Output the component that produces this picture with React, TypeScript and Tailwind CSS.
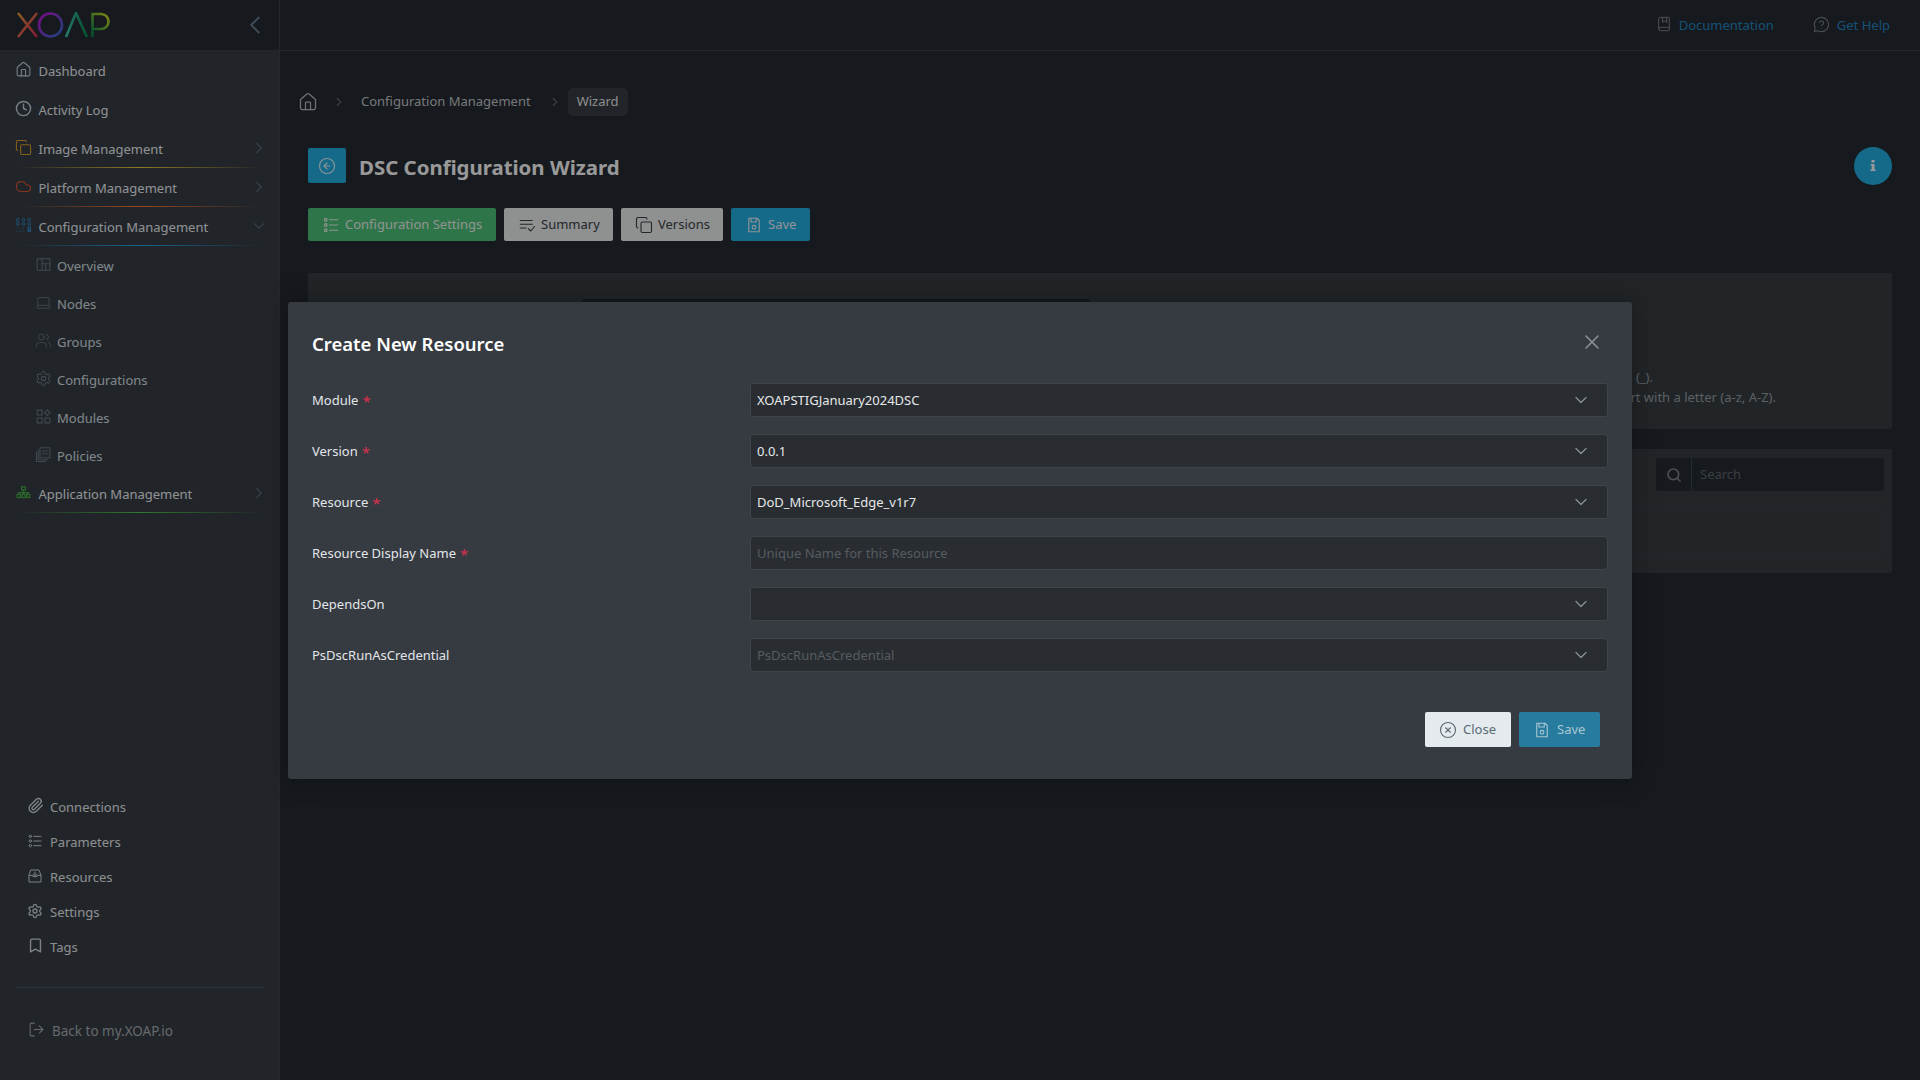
import React from "react";
import { Home, Clock, Copy, Cloud, Laptop, Users, Settings, Paperclip, Bookmark, LogOut, ChevronLeft, ChevronRight, ChevronDown, Search, X, CircleArrowLeft, CircleX, BookMarked, MessageCircleQuestion } from "lucide-react";

type I = { className?: string };
const S = ({ className, children }: I & { children: React.ReactNode }) => (
  <svg viewBox="0 0 24 24" fill="none" stroke="currentColor" strokeWidth="1.5" strokeLinecap="round" strokeLinejoin="round" className={className}>{children}</svg>
);
const SaveIcon = ({ className }: I) => (
  <S className={className}><path d="M5 3h11l3 3v15H5z" /><path d="M8 3v5h7V3" /><circle cx="12" cy="15" r="2.5" /></S>
);
const ListDetails = ({ className }: I) => (
  <S className={className}><circle cx="5" cy="5" r="1.8" /><circle cx="5" cy="12" r="1.8" /><circle cx="5" cy="19" r="1.8" /><path d="M10 5h11M10 12h11M10 19h11" /></S>
);
const ListCheck = ({ className }: I) => (
  <S className={className}><path d="M3 6h16M3 11h16M3 16h8M14 17l3 3 5-6" /></S>
);
const Overview = ({ className }: I) => (
  <S className={className}><rect x="3" y="4" width="18" height="16" /><path d="M10 4v16M10 11h11M15 11v9" /></S>
);
const Modules = ({ className }: I) => (
  <S className={className}><rect x="3" y="3" width="7" height="7" /><rect x="3" y="14" width="7" height="7" /><rect x="14" y="14" width="7" height="7" /><path d="M17.5 2.500l4 4-4 4-4-4z" /></S>
);
const Policies = ({ className }: I) => (
  <S className={className}><rect x="7" y="2.5" width="14" height="14" /><path d="M4.500 6v13.500H18M2 9v13h13M10.500 7h7M10.500 11h7" /></S>
);
const Inbox = ({ className }: I) => (
  <S className={className}><path d="M6 3h12l3 8v10H3V11z" /><path d="M3 11h6v2h6v-2h6" /><path d="M12 6v5M9.500 9l2.500 2.500L14.500 9" /></S>
);
const Sitemap = ({ className }: I) => (
  <svg viewBox="0 0 24 24" fill="none" stroke="currentColor" strokeWidth="2" className={className}>
    <rect x="9" y="3" width="6" height="5" />
    <path d="M12 8v4M4.500 15v-3h15v3M12 12v3" />
    <rect x="2" y="15" width="5" height="5" />
    <rect x="9.500" y="15" width="5" height="5" />
    <rect x="17" y="15" width="5" height="5" />
  </svg>
);
const InfoGlyph = ({ className }: I) => (
  <svg viewBox="0 0 6 11" fill="currentColor" className={className}>
    <rect x="1.5" y="0" width="3" height="2.5" />
    <path d="M0.500 4h4v5.500h1.200V11H0.300V9.500h1.400V5.500H0.500z" />
  </svg>
);
const ConfigDots = ({ className }: I) => (
  <svg viewBox="0 0 26 24" fill="none" stroke="currentColor" strokeWidth="1.6" className={className}>
    {[3, 13, 23].flatMap((x) => [3, 10].map((y) => <circle key={x + "-" + y} cx={x} cy={y} r="2.4" />))}
    <path d="M1 17.500h2M7 17.500h1M12 17.500h2" strokeDasharray="1.5 2" />
    <rect x="21" y="15.5" width="4" height="4" />
    <path d="M1 22.500h14" strokeDasharray="1.5 2.5" />
    <rect x="21" y="20.5" width="4" height="3" />
  </svg>
);

const Logo = () => (
  <svg viewBox="0 0 94 26" className="w-[94px] h-[26px] ml-[16px]" fill="none" strokeWidth="2.6">
    <defs>
      <linearGradient id="lx" x1="0" x2="1" y1="0" y2="1"><stop offset="0" stopColor="#e89a38" /><stop offset="1" stopColor="#e02a5e" /></linearGradient>
      <linearGradient id="lo" x1="0" x2="1" y1="0" y2="1"><stop offset="0" stopColor="#d010e0" /><stop offset="1" stopColor="#2f72d0" /></linearGradient>
      <linearGradient id="la" x1="0" x2="1" y1="0" y2="0"><stop offset="0" stopColor="#3ec8b4" /><stop offset="1" stopColor="#0a8a50" /></linearGradient>
      <linearGradient id="lp" gradientUnits="userSpaceOnUse" x1="76" x2="93" y1="20" y2="4"><stop offset="0" stopColor="#0a8a50" /><stop offset="1" stopColor="#d0e020" /></linearGradient>
    </defs>
    <path d="M2 1l19 24M21 1L2 25" stroke="url(#lx)" />
    <circle cx="34.5" cy="13" r="11.5" stroke="url(#lo)" />
    <path d="M50 25L60 1l11 24" stroke="url(#la)" />
    <path d="M76.500 25V2H85a7.500 7.500 0 0 1 0 15h-8" stroke="url(#lp)" />
  </svg>
);

const Glyph = ({ children, color }: { children: React.ReactNode; color: string }) => (
  <span className={"w-[14px] h-[14px] shrink-0 mr-[8.5px] -mt-[2px] flex items-center justify-center " + color}>{children}</span>
);

const Row = ({ icon, label, color, arrow, line, open }: { icon: React.ReactNode; label: string; color?: string; arrow?: boolean; line?: string; open?: boolean }) => (
  <div className={line ? "h-[39px]" : "h-[39px] flex items-center pl-[16px] pr-[16px]"}>
    {line ? (
      <>
        <div className="h-[38px] flex items-center pl-[16px] pr-[11px]">
          <Glyph color={color ?? ""}>{icon}</Glyph>
          <span className="pt-[4px] text-[13px] text-[#eef3f6]">{label}</span>
          {open ? <ChevronDown className="ml-auto w-[18px] h-[18px] text-[#5a6d7d]" strokeWidth={1.5} /> : arrow ? <ChevronRight className="ml-auto w-[18px] h-[18px] text-[#5a6d7d]" strokeWidth={1.5} /> : null}
        </div>
        <div className={"h-px mx-[16px] " + line} />
      </>
    ) : (
      <>
        <Glyph color="text-[#c6d4e0]">{icon}</Glyph>
        <span className="pt-[2px] text-[13px] text-[#eef3f6]">{label}</span>
      </>
    )}
  </div>
);

const Sub = ({ icon, label }: { icon: React.ReactNode; label: string }) => (
  <div className="h-[38px] flex items-center pl-[36px]">
    <Glyph color="text-[#6b7a86]">{icon}</Glyph>
    <span className="pt-[4px] -ml-[1.5px] text-[13px] text-[#d9e0e6]">{label}</span>
  </div>
);

const Bottom = ({ icon, label }: { icon: React.ReactNode; label: string }) => (
  <div className="h-[35px] flex items-center pl-[28px]">
    <Glyph color="text-[#d0d8de]">{icon}</Glyph>
    <span className="pt-[2px] -ml-[.5px] text-[13px] text-[#eaeef0]">{label}</span>
  </div>
);

const Field = ({ label, req, value, placeholder, chevron = true }: { label: string; req?: boolean; value?: string; placeholder?: string; chevron?: boolean }) => (
  <div className="flex h-[34px] mb-[17px] items-center">
    <div className="w-[438px] pt-[2px] text-[13px] text-[#e3e6e9]">
      {label}
      {req && <span className="text-[#d9304f] ml-[4px] text-[15px] leading-none align-[-2px]">*</span>}
    </div>
    <div className="flex-1 h-[34px] flex items-center rounded-[3px] border border-[#3f4449] bg-[#292d31] pl-[6px] pr-[16px] text-[13px]">
      <span className={"pt-[2px] " + (value ? "text-[#e6e8ea]" : "text-[#565c62]")}>{value ?? placeholder}</span>
      {chevron && <ChevronDown className="ml-auto w-[20px] h-[20px] text-[#8a9096]" strokeWidth={1.5} />}
    </div>
  </div>
);

export default function App() {
  return (
    <div className="relative flex h-screen w-screen overflow-hidden bg-[#262b32] font-['Noto_Sans',sans-serif]">
      <aside className="w-[280px] shrink-0 flex flex-col bg-[#373d44] border-r border-[#3d4249]">
        <div className="h-[51px] shrink-0 flex items-center bg-[#262b32] border-b border-[#3d4249]">
          <Logo />
          <ChevronLeft className="ml-auto mr-[9px] w-[30px] h-[30px] text-[#6c8296]" strokeWidth={1.5} />
        </div>
        <nav className="flex flex-col">
          <Row icon={<Home className="shrink-0 w-[17px] h-[17px]" strokeWidth={1.5} />} label="Dashboard" />
          <Row icon={<Clock className="shrink-0 w-[17px] h-[17px]" />} label="Activity Log" />
          <Row icon={<Copy className="shrink-0 w-[17px] h-[17px]" strokeWidth={1.5} />} color="text-[#e0a030]" label="Image Management" arrow line="bg-gradient-to-r from-transparent via-[#ebcc3e] to-transparent" />
          <Row icon={<Cloud className="shrink-0 w-[17px] h-[17px]" strokeWidth={1.5} />} color="text-[#e05a30]" label="Platform Management" arrow line="bg-gradient-to-r from-transparent via-[#ff7b2f] to-transparent" />
          <Row icon={<ConfigDots className="shrink-0 w-[15px] h-[14px]" />} color="text-[#2f8fd0]" label="Configuration Management" open line="bg-gradient-to-r from-transparent via-[#2aa9f0] to-transparent" />
          <Sub icon={<Overview className="shrink-0 w-[17px] h-[17px]" />} label="Overview" />
          <Sub icon={<Laptop className="shrink-0 w-[17px] h-[17px]" strokeWidth={1.25} />} label="Nodes" />
          <Sub icon={<Users className="shrink-0 w-[17px] h-[17px]" strokeWidth={1.25} />} label="Groups" />
          <Sub icon={<Settings className="shrink-0 w-[17px] h-[17px]" strokeWidth={1.5} />} label="Configurations" />
          <Sub icon={<Modules className="shrink-0 w-[17px] h-[17px]" />} label="Modules" />
          <Sub icon={<Policies className="shrink-0 w-[17px] h-[17px]" />} label="Policies" />
          <Row icon={<Sitemap className="shrink-0 w-[15px] h-[15px]" />} color="text-[#48b048]" label="Application Management" arrow line="bg-gradient-to-r from-transparent via-[#4dcc4d] to-transparent" />
        </nav>
        <div className="mt-auto flex flex-col pb-[32px]">
          <Bottom icon={<Paperclip className="shrink-0 w-[17px] h-[17px]" />} label="Connections" />
          <Bottom icon={<ListDetails className="shrink-0 w-[16px] h-[16px]" />} label="Parameters" />
          <Bottom icon={<Inbox className="shrink-0 w-[16px] h-[16px]" />} label="Resources" />
          <Bottom icon={<Settings className="shrink-0 w-[16px] h-[16px]" />} label="Settings" />
          <Bottom icon={<Bookmark className="shrink-0 w-[17px] h-[17px]" />} label="Tags" />
          <div className="h-px mx-[16px] mt-[23px] bg-[#49586b]" />
          <div className="h-[35px] mt-[25px] flex items-center pl-[28px]">
            <LogOut className="w-[17px] h-[17px] mr-[7px] -mt-[2px] text-[#a8b0b6]" strokeWidth={1.5} />
            <span className="pt-[2px] text-[13.5px] text-[#aab0b4]">Back to my.XOAP.io</span>
          </div>
        </div>
      </aside>

      <main className="flex-1 min-w-0 flex flex-col">
        <header className="h-[51px] shrink-0 flex items-center justify-end border-b border-[#3d4249] pr-[30px] text-[13px] text-[#2388c4]">
          <BookMarked className="w-[16px] h-[16px] mr-[7px] -mt-[2px] text-[#7e858c]" strokeWidth={1.5} />
          <span className="pt-[2px]">Documentation</span>
          <MessageCircleQuestion className="w-[17px] h-[17px] ml-[39px] mr-[7px] -mt-[2px] text-[#7e858c]" strokeWidth={1.5} />
          <span className="pt-[2px]">Get Help</span>
        </header>
        <div className="pl-[28px] pr-[28px] flex flex-col">
          <div className="flex items-center h-[28px] mt-[37px] text-[13px]">
            <Home className="w-[20px] h-[20px] ml-[-10px] mr-[14px] text-[#b8bec4]" strokeWidth={1.5} />
            <ChevronRight className="w-[14px] h-[14px] text-[#5e646a]" />
            <span className="ml-[15px] text-[#c5c9cc]">Configuration Management</span>
            <ChevronRight className="w-[14px] h-[14px] ml-[17px] text-[#5e646a]" />
            <span className="ml-[6px] h-[28px] px-[9px] flex items-center rounded-[5px] bg-[#373d44] text-[#e8eaec]">Wizard</span>
          </div>
          <div className="flex items-center mt-[32px] h-[35px]">
            <div className="w-[38px] h-[35px] rounded-[2px] bg-[#23b1e6] flex items-center justify-center">
              <CircleArrowLeft className="w-[18px] h-[18px] text-[#eef6f9]" strokeWidth={1.5} />
            </div>
            <h1 className="ml-[13px] mt-[4px] text-[20.4px] font-bold text-[#ffffff]">DSC Configuration Wizard</h1>
            <div className="ml-auto w-[38px] h-[38px] rounded-full bg-[#23b1e6] flex items-center justify-center">
              <InfoGlyph className="w-[6px] h-[11px] text-[#ffffff]" />
            </div>
          </div>
          <div className="flex gap-[8px] mt-[25px] text-[13px]">
            <button className="h-[33px] w-[188px] rounded-[2px] bg-[#4ec37a] text-[#eef6f1] flex items-center pl-[14px]">
              <ListDetails className="w-[18px] h-[18px] mr-[5px]" /><span className="pt-[1px]">Configuration Settings</span>
            </button>
            <button className="h-[33px] w-[109px] rounded-[2px] bg-[#eef0f1] text-[#3c4248] flex items-center pl-[14px]">
              <ListCheck className="w-[18px] h-[18px] mr-[5px]" /><span className="pt-[1px]">Summary</span>
            </button>
            <button className="h-[33px] w-[102px] rounded-[2px] bg-[#eef0f1] text-[#3c4248] flex items-center pl-[14px]">
              <Copy className="w-[18px] h-[18px] mr-[5px]" strokeWidth={1.5} /><span className="pt-[1px]">Versions</span>
            </button>
            <button className="h-[33px] w-[79px] rounded-[2px] bg-[#23b1e6] text-[#f2f6f8] flex items-center pl-[14px]">
              <SaveIcon className="w-[18px] h-[18px] mr-[5px]" /><span className="pt-[1px]">Save</span>
            </button>
          </div>

          <section className="mt-[32px] h-[156px] rounded-[3px] bg-[#373e44] pt-[26px]">
            <div className="ml-[274px] w-[508px] h-[34px] rounded-[3px] bg-[#23282d]" />
            <div className="mt-[34px] flex flex-col items-end pr-[116px] text-[13px] leading-[20px] text-[#9aa0a5] whitespace-nowrap">
              <p className="pr-[123px]">Only letters, numbers, hyphens (-) and underscores (_).</p>
              <p>The name cannot exceed 64 characters and must start with a letter (a-z, A-Z).</p>
            </div>
          </section>

          <section className="mt-[20px] h-[124px] rounded-[3px] bg-[#373e44]">
            <div className="flex justify-end pt-[9px] pr-[8px] pb-[7px] border-b border-[#3c4349]">
              <div className="w-[228px] h-[33px] rounded-[3px] bg-[#262b32] flex text-[13px]">
                <div className="w-[36px] flex items-center justify-center border-r border-[#3f464c]">
                  <Search className="w-[16px] h-[16px] text-[#7e8489]" strokeWidth={2.5} />
                </div>
                <span className="pl-[8px] self-center text-[#62686d]">Search</span>
              </div>
            </div>
            <div className="ml-[8px] mr-[9px] mt-[8px] h-[49px] rounded-[3px] border border-[#3b4248]" />
          </section>
        </div>
      </main>

      <div className="absolute inset-0 bg-black/40 flex justify-center pt-[302px]">
        <div className="w-[1344px] h-[477px] rounded-[3px] bg-[#363b42] shadow-[0_0_24px_rgba(0,0,0,0.3)] px-[24px] pt-[24px] flex flex-col">
          <div className="flex items-center h-[34px] mb-[23px]">
            <h2 className="pt-[2px] text-[18.5px] font-semibold text-white">Create New Resource</h2>
            <X className="ml-auto mr-[4px] w-[24px] h-[24px] text-[#8d949b] -mt-[3px]" strokeWidth={1.5} />
          </div>
          <Field label="Module" req value="XOAPSTIGJanuary2024DSC" />
          <Field label="Version" req value="0.0.1" />
          <Field label="Resource" req value="DoD_Microsoft_Edge_v1r7" />
          <Field label="Resource Display Name" req placeholder="Unique Name for this Resource" chevron={false} />
          <Field label="DependsOn" />
          <Field label="PsDscRunAsCredential" placeholder="PsDscRunAsCredential" />
          <div className="flex justify-end gap-[8px] pr-[8px] mt-[23px] text-[13px]">
            <button className="w-[86px] h-[35px] rounded-[2px] bg-[#e4eaed] text-[#5b6a75] flex items-center pl-[14px]">
              <CircleX className="w-[18px] h-[18px] mr-[6px]" strokeWidth={1.5} /><span className="pt-[1px]">Close</span>
            </button>
            <button className="w-[81px] h-[35px] rounded-[2px] bg-[#277b9e] text-[#a9c6d3] flex items-center pl-[14px]">
              <SaveIcon className="w-[18px] h-[18px] mr-[6px]" /><span className="pt-[1px]">Save</span>
            </button>
          </div>
        </div>
      </div>
    </div>
  );
}
